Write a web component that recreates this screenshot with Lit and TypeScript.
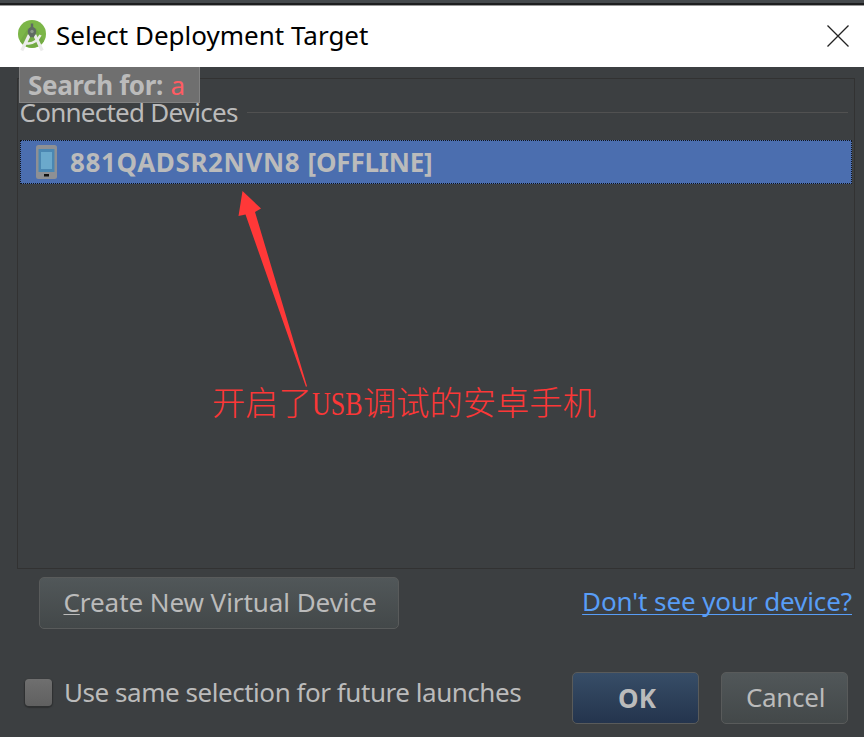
import { LitElement, html, css, svg } from "lit";
import { customElement } from "lit/decorators.js";

const studioLogo = svg`
  <circle cx="15" cy="14" r="14" fill="#7cb648"></circle>
  <path d="M3 21A14 14 0 0 0 27 21L19 8h-8z" fill="#74ab44"></path>
  <path d="M12.300 15 4.800 30.500M17.700 15 25.200 30.500" stroke="#ebebeb" stroke-width="3.200"></path>
  <path d="M8 23Q18 25.500 23.500 15" stroke="#eceeea" stroke-width="2.600" fill="none"></path>
  <path d="M13.800 3.500h2.400v3.500a5 5 0 0 1 2.800 6.300l-2.200 3.900h-3.600l-2.200-3.900a5 5 0 0 1 2.800-6.300z" fill="#5f6a62"></path>
  <circle cx="15" cy="11.500" r="1.700" fill="#8d998c"></circle>`;

@customElement("app-root")
export class AppRoot extends LitElement {
  static styles = css`
    :host {
      display: flex;
      flex-direction: column;
      box-sizing: border-box;
      height: 737px;
      overflow: hidden;
      background: #3c3f41;
      color: #bbbbbb;
      font: 26px/36px "Noto Sans", "Noto Sans CJK SC", sans-serif;
      white-space: nowrap;
    }
    * { box-sizing: border-box; }
    svg { display: block; flex: none; }
    .edge { height: 5px; flex: none; background: #45494c; border-bottom: 2px solid #1d1e1f; }
    .titlebar {
      height: 62px; flex: none; display: flex; align-items: center;
      padding: 0 15px 0 17px; background: #fff; color: #000;
      border-top: 1px solid #999;
    }
    .title { flex: 1; padding: 0 0 3px 9px; }
    .content { position: relative; padding: 11px 9px 0 17px; flex: none; }
    .logo, .close { margin-bottom: 2px; }
    .search {
      position: absolute; left: 19px; top: 0; width: 181px; height: 36px;
      padding-left: 8px; background: #6f6f6f; border: 1px solid #828282; border-top: none;
      font-weight: bold; line-height: 37px; letter-spacing: -0.35px;
    }
    .query { color: #ff5c63; font-weight: normal; margin-left: 1px; }
    .panel { height: 491px; border: 1px solid #323232; padding: 15px 2px 0; }
    .group { display: flex; align-items: center; height: 36px; padding-right: 4px; letter-spacing: -0.75px; }
    .group span:first-child { margin-left: -0.5px; }
    .rule { flex: 1; height: 1px; margin-left: 9px; background: #515151; }
    .device {
      height: 44px; margin-top: 10px; display: flex; align-items: center;
      padding-left: 15px; background: #4b6eaf; border: 1px dotted #10131a;
      font-weight: bold;
    }
    .serial { padding-left: 13px; letter-spacing: 0.63px; }
    .state { letter-spacing: -0.2px; }
    .arrow { position: absolute; left: 236px; top: 123px; }
    .note {
      position: absolute; left: 212px; top: 317px; line-height: 40px; font-size: 33.3px;
      color: #fb3737; font-family: "Liberation Serif", "Noto Sans CJK SC", serif; font-weight: 300;
    }
    .latin { display: inline-block; width: 51px; }
    .narrow { display: inline-block; transform: scaleX(0.78); transform-origin: left; }
    .actions { display: flex; justify-content: space-between; padding: 8px 12px 0 39px; }
    .btn {
      height: 52px; display: flex; align-items: center; justify-content: center;
      padding-bottom: 2px;
      border: 1px solid #595b5b; border-radius: 5px;
      background: linear-gradient(#515759, #434849);
    }
    .create { width: 360px; letter-spacing: -0.06px; padding-left: 2px; }
    .mnemonic { text-decoration: underline; text-decoration-thickness: 1px; text-underline-offset: 2px; }
    .link { color: #589df6; height: 36px; margin-top: 6px; letter-spacing: -0.1px; text-decoration: underline; text-decoration-thickness: 1px; text-underline-offset: 3px; text-decoration-skip-ink: none; }
    .footer { display: flex; padding: 43px 16px 0 25px; }
    .box { width: 27px; height: 27px; margin-top: 7px; border-radius: 4px; background: linear-gradient(#6f6f6f, #606060); box-shadow: 0 1px 1px 1px #2e3031; }
    .same { padding-left: 12px; margin-top: 2px; flex: 1; letter-spacing: -0.46px; }
    .ok { width: 127px; font-weight: bold; padding: 0 0 0 3px; background: linear-gradient(#374d67, #24344d); }
    .cancel { width: 127px; margin-left: 22px; letter-spacing: -0.3px; padding-left: 2px; }
  `;

  render() {
    return html`
      <div class="edge"></div>
      <header class="titlebar">
        <svg class="logo" width="30" height="32" viewBox="0 0 30 32" fill="none">${studioLogo}</svg>
        <span class="title">Select Deployment Target</span>
        <svg class="close" width="22" height="22" viewBox="0 0 22 22"><path d="M.5.5l21 21M21.5.5l-21 21" stroke="#222" stroke-width="1.3"></path></svg>
      </header>
      <main class="content">
        <section class="panel">
          <div class="group"><span>Connected Devices</span><span class="rule"></span></div>
          <div class="device">
            <svg width="21" height="34" viewBox="0 0 21 34">
              <rect width="21" height="34" rx="2.5" fill="#8e9094"></rect>
              <rect x="2.5" y="4" width="16" height="23" fill="#4b87b2"></rect>
              <rect x="5" y="7" width="11" height="17" fill="#6ba9cc"></rect>
              <rect x="8" y="29" width="5" height="2.5" fill="#111"></rect>
            </svg>
            <span class="serial">881QADSR2NVN8 <span class="state">[OFFLINE]</span></span>
          </div>
        </section>
        <div class="search">Search for: <span class="query">a</span></div>
        <svg class="arrow" width="74" height="200" viewBox="0 0 74 200">
          <path d="M6.5 1 25 18.5 19 22 71 196 70 197 9.5 24.5 2.5 26z" fill="#ff3838"></path>
        </svg>
        <div class="note">开启了<span class="latin"><span class="narrow">USB</span></span>调试的安卓手机</div>
      </main>
      <div class="actions">
        <div class="btn create"><span><span class="mnemonic">C</span>reate New Virtual Device</span></div>
        <span class="link">Don't see your device?</span>
      </div>
      <footer class="footer">
        <span class="box"></span>
        <span class="same">Use same selection for future launches</span>
        <div class="btn ok">OK</div>
        <div class="btn cancel">Cancel</div>
      </footer>`;
  }
}
